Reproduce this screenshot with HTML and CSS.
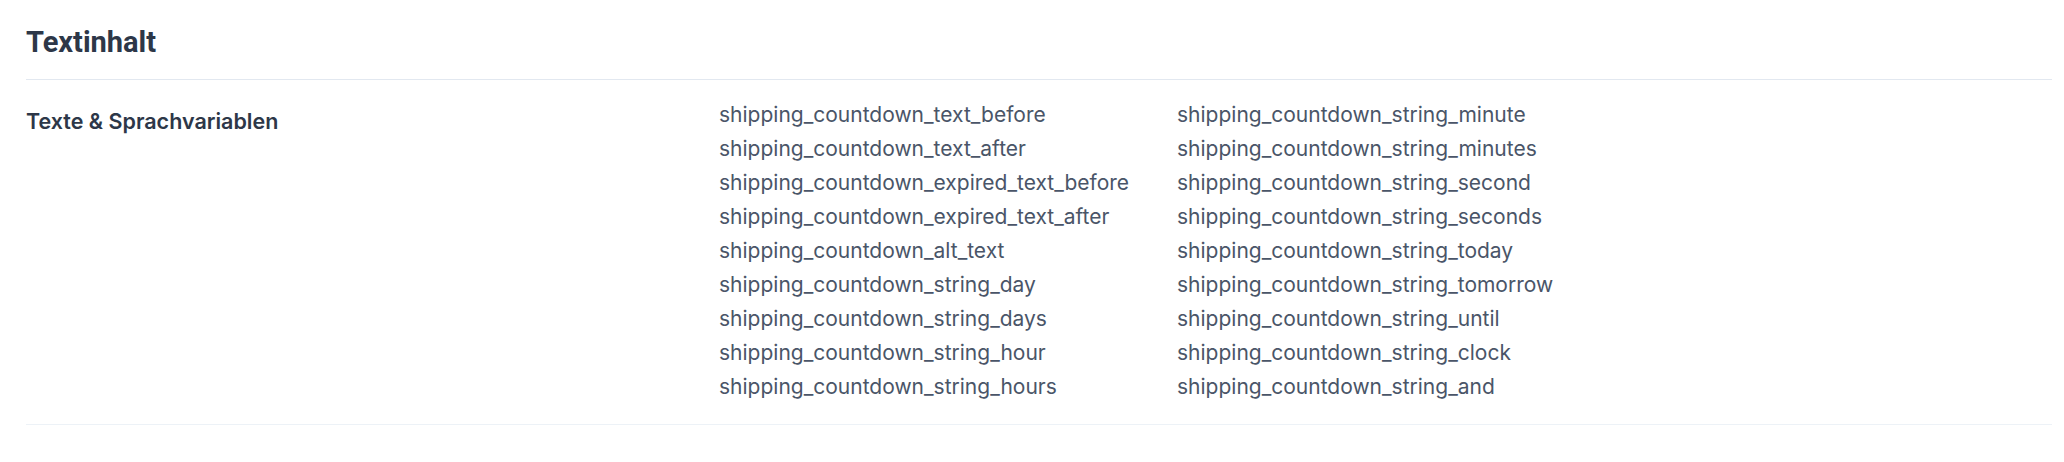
FILE: index.html
```html
<!DOCTYPE html>
<html lang="de">
<head>
<meta charset="utf-8">
<link rel="stylesheet" href="styles.css">
<title>Textinhalt</title>
</head>
<body>
<section class="panel">
  <h2 class="panel-title">Textinhalt</h2>
  <dl class="detail-row">
    <dt class="detail-label">Texte &amp; Sprachvariablen</dt>
    <dd class="detail-value">
      <ul class="var-list">
        <li>shipping_countdown_text_before</li>
        <li>shipping_countdown_text_after</li>
        <li>shipping_countdown_expired_text_before</li>
        <li>shipping_countdown_expired_text_after</li>
        <li>shipping_countdown_alt_text</li>
        <li>shipping_countdown_string_day</li>
        <li>shipping_countdown_string_days</li>
        <li>shipping_countdown_string_hour</li>
        <li>shipping_countdown_string_hours</li>
      </ul>
      <ul class="var-list">
        <li>shipping_countdown_string_minute</li>
        <li>shipping_countdown_string_minutes</li>
        <li>shipping_countdown_string_second</li>
        <li>shipping_countdown_string_seconds</li>
        <li>shipping_countdown_string_today</li>
        <li>shipping_countdown_string_tomorrow</li>
        <li>shipping_countdown_string_until</li>
        <li>shipping_countdown_string_clock</li>
        <li>shipping_countdown_string_and</li>
      </ul>
    </dd>
  </dl>
</section>
</body>
</html>
```
FILE: styles.css
```css
* { box-sizing: border-box; }
html, body { margin: 0; padding: 0; background: #ffffff; }
body { font-family: Inter, "Noto Sans", sans-serif; }

.panel {
  padding: 0 12px 0 26px;
}

.panel-title {
  margin: 0;
  padding: 22px 0 17px;
  font-family: Roboto, "Open Sans", sans-serif;
  font-weight: 700;
  font-size: 29px;
  line-height: 40px;
  color: #2d3748;
  border-bottom: 1px solid #e2e8f0;
}

.detail-row {
  margin: 0;
  display: grid;
  grid-template-columns: 693px 1fr;
  padding: 18px 0 20px;
  border-bottom: 1px solid #edf2f7;
}

.detail-label {
  padding-top: 6px;
  font-size: 21.5px;
  line-height: 34px;
  font-weight: 600;
  color: #2d3748;
}

.detail-value {
  margin: 0;
  display: grid;
  grid-template-columns: 458px auto;
}

.var-list {
  list-style: none;
  margin: 0;
  padding: 0;
  font-size: 21px;
  line-height: 34px;
  color: #4a5568;
}
```
